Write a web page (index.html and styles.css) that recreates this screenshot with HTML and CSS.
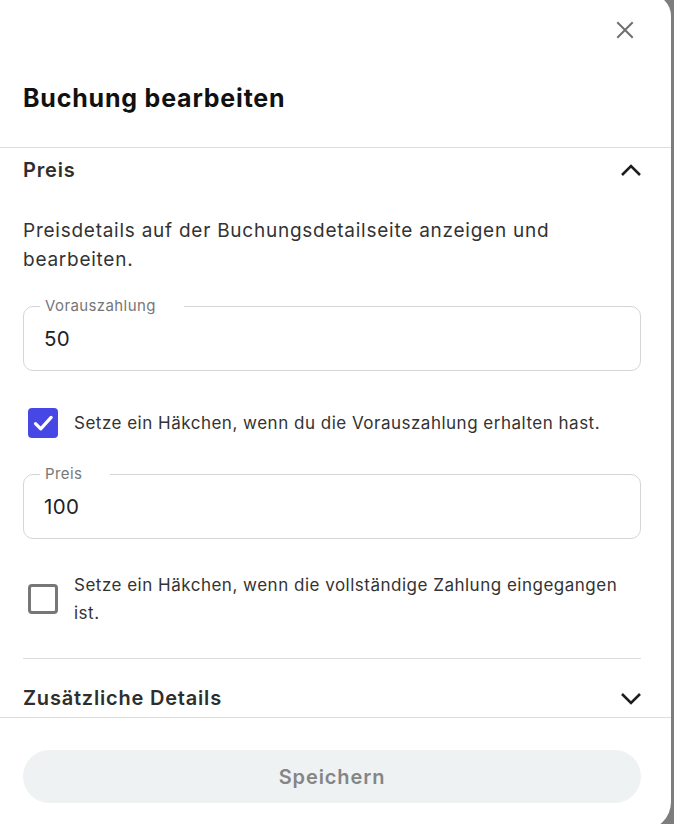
FILE: index.html
```html
<!DOCTYPE html>
<html lang="de">
<head>
<meta charset="utf-8">
<title>Buchung bearbeiten</title>
<link rel="stylesheet" href="styles.css">
</head>
<body>
<div class="modal">
  <div class="header">
    <div class="close-row">
      <button class="close" aria-label="Schließen">
        <svg viewBox="0 0 24 24" width="24" height="24"><path d="M5 5 L19 19 M19 5 L5 19" stroke="#6f6f6f" stroke-width="2" fill="none" stroke-linecap="square"/></svg>
      </button>
    </div>
    <h1 class="title">Buchung bearbeiten</h1>
  </div>
  <div class="body">
    <div class="section">
      <div class="section-head">
        <span>Preis</span>
        <svg class="chev" viewBox="0 0 24 24" width="24" height="24"><path d="M3 17 L12 8 L21 17" stroke="#1e1e1e" stroke-width="2.6" fill="none" stroke-linejoin="miter"/></svg>
      </div>
      <p class="desc">Preisdetails auf der Buchungsdetailseite anzeigen und bearbeiten.</p>
      <fieldset class="field">
        <legend>Vorauszahlung</legend>
        <div class="value">50</div>
      </fieldset>
      <div class="check">
        <span class="box checked">
          <svg viewBox="0 0 24 24" width="30" height="30"><path d="M6 12.5 L10.2 16.7 L18.5 7.5" stroke="#fff" stroke-width="2.6" fill="none" stroke-linecap="round" stroke-linejoin="round"/></svg>
        </span>
        <span class="check-text">Setze ein Häkchen, wenn du die Vorauszahlung erhalten hast.</span>
      </div>
      <fieldset class="field field-2">
        <legend>Preis</legend>
        <div class="value">100</div>
      </fieldset>
      <div class="check check-2">
        <span class="box"></span>
        <span class="check-text">Setze ein Häkchen, wenn die vollständige Zahlung eingegangen ist.</span>
      </div>
    </div>
    <div class="section section-2">
      <div class="section-head">
        <span>Zusätzliche Details</span>
        <svg class="chev" viewBox="0 0 24 24" width="24" height="24"><path d="M3 8 L12 17 L21 8" stroke="#1e1e1e" stroke-width="2.6" fill="none"/></svg>
      </div>
    </div>
  </div>
  <div class="footer">
    <button class="save">Speichern</button>
  </div>
</div>
</body>
</html>
```

FILE: styles.css
```css
* { box-sizing: border-box; }
html, body { margin: 0; padding: 0; }
body {
  background: #7d7d7d;
  font-family: Inter, "Noto Sans", sans-serif;
  color: #333;
  width: 674px;
  height: 824px;
  overflow: hidden;
}
.modal {
  width: 671px;
  height: 836px;
  margin-top: -6px;
  background: #fff;
  border-radius: 0 22px 28px 0;
  display: flex;
  flex-direction: column;
  overflow: hidden;
}
.header {
  padding: 24px 30px 0 23px;
  border-bottom: 1px solid #dedede;
}
.close-row {
  display: flex;
  justify-content: flex-end;
}
.close {
  border: 0;
  background: none;
  padding: 0;
  margin-right: 4px;
  width: 24px;
  height: 24px;
  display: flex;
}
.title {
  margin: 40px 0 0;
  font-size: 25px;
  line-height: 32px;
  font-weight: 700;
  color: #111;
  letter-spacing: 0.8px;
  padding-bottom: 33px;
}
.body {
  height: 569px;
  overflow: hidden;
  padding: 0 30px 0 23px;
}
.section-head {
  height: 44px;
  display: flex;
  align-items: center;
  justify-content: space-between;
  font-size: 20px;
  font-weight: 600;
  letter-spacing: 0.8px;
  color: #2e2e2e;
}
.chev { margin-right: -2px; }
.desc {
  margin: 24px 0 0;
  font-size: 19px;
  line-height: 29px;
  letter-spacing: 0.75px;
  color: #333;
}
.field {
  margin: 23px 0 0;
  padding: 0 20px 19px;
  border: 1px solid #d3d5d7;
  border-radius: 10px;
  min-width: 0;
}
.field legend {
  font-size: 15px;
  line-height: 18px;
  letter-spacing: 0.4px;
  color: #777;
  padding: 0 28px 0 5px;
  margin-left: -4px;
}
.value {
  padding-top: 12px;
  font-size: 20.5px;
  line-height: 24px;
  letter-spacing: 0.4px;
  color: #222;
}
.check {
  margin-top: 37px;
  display: flex;
  align-items: center;
  gap: 16px;
  padding-left: 5px;
}
.box {
  flex: none;
  width: 30px;
  height: 30px;
  border-radius: 4px;
  border: 3px solid #777;
  display: flex;
}
.box.checked {
  background: #4747e6;
  border: 0;
}
.check-text {
  font-size: 17px;
  line-height: 28px;
  letter-spacing: 0.5px;
  color: #333;
}
.field-2 { margin-top: 27px; }
.check-2 { margin-top: 32px; }
.section-2 {
  margin-top: 31px;
  border-top: 1px solid #dedede;
  padding-top: 17px;
}
.footer {
  border-top: 1px solid #dedede;
  padding: 32px 30px 0 23px;
}
.save {
  width: 100%;
  height: 53px;
  border: 0;
  border-radius: 27px;
  background: #eff2f3;
  color: #858585;
  font-family: Inter, "Noto Sans", sans-serif;
  font-size: 20px;
  font-weight: 600;
  letter-spacing: 0.9px;
}
```
